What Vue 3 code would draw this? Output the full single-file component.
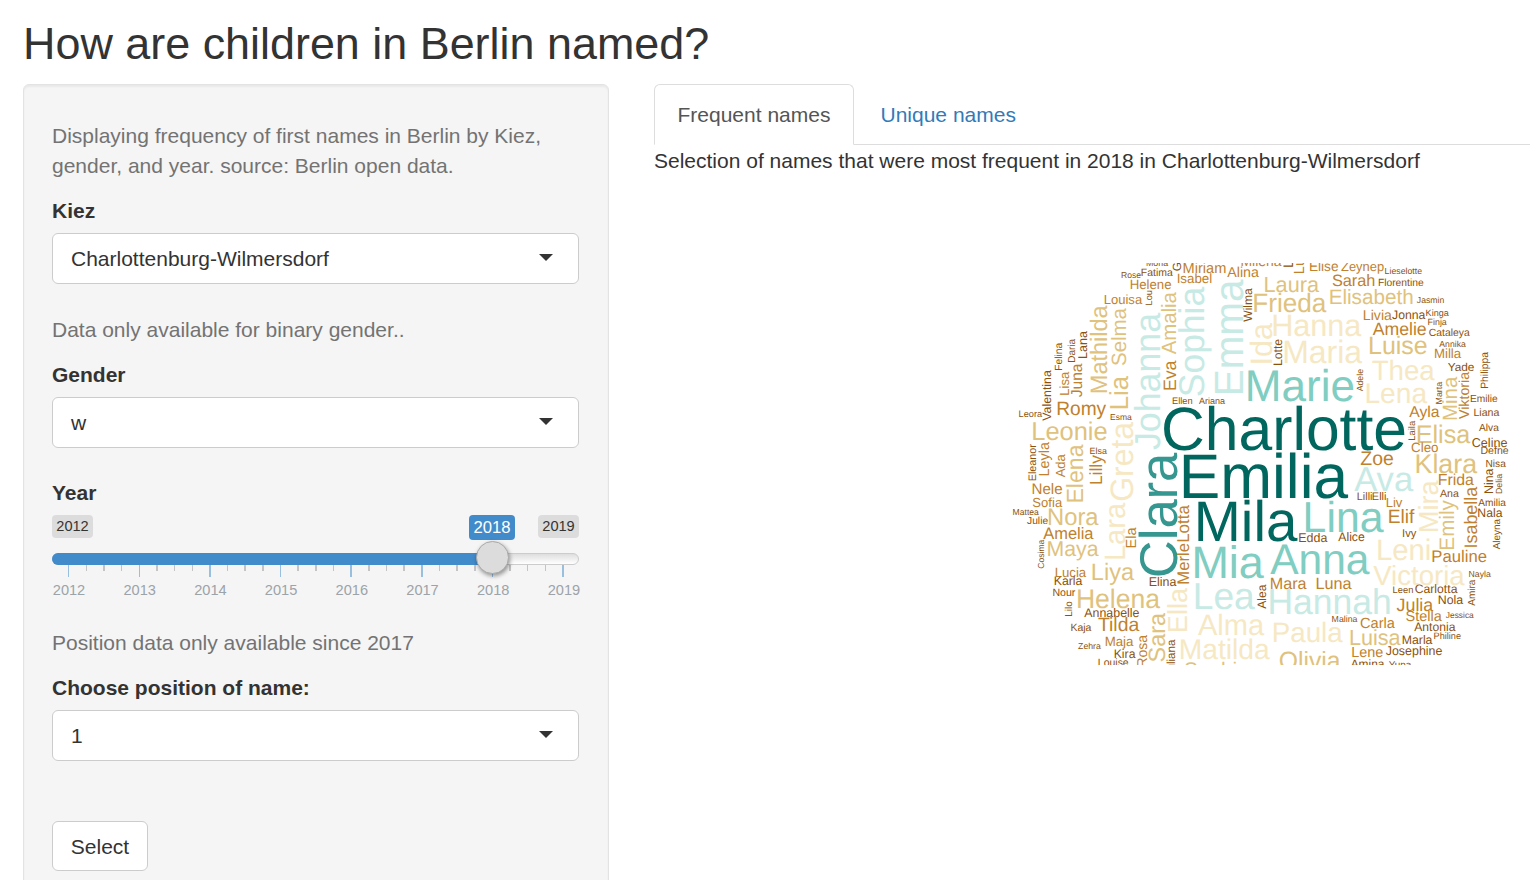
<script setup>
const palette = {
  d: '#8c510a', b: '#bf812d', g: '#dfc27d', w: '#f6e8c3',
  c: '#c7eae5', t: '#80cdc1', k: '#35978f', D: '#01665e'
}

// name, colour key, ink start x, ink end x, baseline y
const across = `Mona d 1146.7 1168 265.7
Rose d 1121.7 1140.7 278
Fatima d 1141.7 1172.7 276
Miriam b 1183.7 1225.3 273
Isabel b 1177.7 1211.3 283
Alina b 1227.3 1258.7 276.7
Milena b 1241.5 1281.5 266.4
Helene b 1130.7 1171 288.7
Louisa b 1104.7 1142 304
Elise b 1310 1338 271.3
Zeynep b 1341.3 1384 271.3
Lieselotte d 1385.3 1421.7 273.5
Laura g 1265.3 1318.7 291.7
Sarah b 1332.7 1374.3 286
Florentine d 1378.7 1423.3 286
Frieda g 1254.3 1326 311.7
Elisabeth g 1330.3 1412.3 304
Jasmin d 1417 1443.7 302.7
Livia b 1364 1391.7 319.7
Jonna d 1392.3 1425.3 319
Kinga d 1426.3 1448.7 316.3
Finja d 1428.3 1446.7 324.7
Hanna w 1273.7 1361 335.7
Amelie b 1372.7 1426 334.7
Cataleya d 1429.3 1469.7 336
Luise g 1370 1426.7 354
Annika d 1439.3 1465.7 347
Milla b 1435 1461 358
Maria w 1284.7 1361.7 362.7
Thea w 1372.3 1434.3 380.3
Yade d 1447.7 1474 371
Marie t 1248.3 1353.3 401
Lena w 1366.7 1426.7 402.7
Leora d 1019.3 1042 417
Romy b 1057.7 1106 414.7
Esma d 1110.7 1131.7 419.7
Ellen d 1172.7 1192 403.7
Ariana d 1199 1225 403.7
Leonie g 1033.3 1106.7 439.7
Elsa d 1090.3 1106.7 454
Charlotte D 1164 1404.7 450
Emilia D 1183.7 1347.3 497.7
Mila D 1198.3 1296.7 540.7
Nele b 1032.7 1062 494
Sofia b 1033 1062 507
Mattea d 1013.3 1038.7 515
Julie d 1027.3 1047.7 524
Nora g 1049 1098.3 524.7
Ayla b 1409.3 1439.3 417
Emilie d 1470.7 1497.3 402
Liana d 1474.3 1499.3 415.7
Alva d 1479 1498.7 430.7
Elisa g 1417.7 1470 442.7
Celine d 1472.3 1507 446.7
Cleo b 1411.7 1438 452
Defne d 1481.3 1508.3 454.3
Zoe b 1360.7 1393 464.7
Klara g 1416.7 1476.7 473
Nisa d 1486.3 1505.7 466.7
Ava c 1354.3 1412.7 490.7
Frida b 1439 1473.7 485
Lilli d 1357.7 1371.7 499.7
Elli d 1372.7 1385.7 499.7
Ana d 1440 1458.7 497
Liv b 1386.7 1402.3 507
Elif b 1389.3 1414.3 523
Amilia d 1478.3 1505.7 505.7
Nala d 1478.3 1502.3 516.7
Lina t 1306 1383 531.7
Amelia b 1043.3 1093.3 538.7
Maya g 1048.3 1098.3 556.3
Lucia b 1055.7 1086 576.7
Liya g 1092.7 1133.7 580.3
Karla d 1054.7 1082.3 584.7
Elina d 1149.7 1176.3 585.7
Mia t 1195 1263.3 577.7
Nour d 1053.3 1075.3 595.7
Helena g 1078 1159.7 607.7
Annabelle d 1084.3 1139 616.7
Lea c 1195.7 1254.3 609.3
Kaja d 1071.3 1091.3 630.7
Tilda b 1098.3 1139 631.3
Zehra d 1078.3 1100.7 648.7
Maja b 1105.7 1133.3 645.7
Kira d 1114.7 1135.3 657.7
Louise d 1098.7 1128.3 666.3
Elea d 1148 1168 672.5
Alma w 1198 1263.7 634.7
Matilda w 1181 1269.3 659.3
Sophie g 1185 1248 676.5
Edda d 1299.3 1327.3 541.7
Alice d 1338.3 1364.3 541
Ivy d 1403 1416.3 536.7
Anna t 1270.3 1369 574
Leni w 1378.3 1429.3 560.3
Pauline b 1432.7 1486.3 562.3
Victoria w 1373.3 1464.3 585
Nayla d 1469.3 1490.7 576.7
Mara b 1271 1306.3 588.7
Luna b 1316.7 1351.3 588.7
Leen d 1393.3 1412.7 592.7
Carlotta d 1415.3 1457.3 592.7
Hannah c 1270.3 1389.3 613.7
Julia b 1397 1433 610.7
Nola d 1438.7 1463 603.7
Stella b 1406.3 1441.7 621.3
Jessica d 1446 1473.7 617.7
Malina d 1332.3 1357.3 621.7
Carla b 1360.7 1394.7 627.7
Antonia d 1414.3 1455.3 630.7
Philine d 1434.3 1460.7 638.7
Paula w 1274 1342.3 642
Luisa g 1350.7 1400.3 645.3
Marla d 1402.7 1432.3 643.7
Lene b 1352.3 1382.7 656.7
Josephine d 1386 1442 654.7
Olivia g 1280 1340.3 669
Amina d 1350.7 1384.3 668.3
Yuna d 1388.7 1411.3 668.3`

// name, colour key, ink bottom y, ink top y, baseline x
const upright = `Greta d 270.7 242 1181
Lou d 304.7 290.7 1151.7
Amalia g 354.3 292.3 1176
Sophia c 395.5 287.3 1203.7
Emma c 393 280 1242.7
Wilma d 321.7 288.3 1252
Mathilda g 392.3 305.7 1107
Selma g 365 308.3 1126
Lia g 408.3 376.3 1128
Johanna c 449.3 313.3 1160
Eva b 389.7 360.7 1176
Felina d 370 343 1062
Daria d 362 339 1074.7
Lana d 358 331.3 1087
Juna b 397 363.7 1081.7
Lisa b 394.7 372 1069
Valentina d 420.7 370.3 1051
Leni d 267 243 1293
Luzie b 273 240 1303.7
Lotte d 365 339.3 1281.7
Ida w 363 323.3 1272
Philippa d 388 352 1488
Adele d 391.3 369.3 1363
Marta d 403.7 382 1442
Mina g 419.3 377 1456.7
Viktoria b 419 372 1468.7
Eleanor d 480.3 444.3 1035.7
Leyla b 475.3 442.3 1049
Ada b 477.3 454.3 1065
Elena g 501.7 444.7 1083
Lilly b 483.7 455.3 1102.3
Greta w 500.3 422.3 1132.7
Clara k 575.7 453.3 1176.7
Lotta b 541.5 505.3 1189.3
Merle b 583.3 543.7 1189.3
Lara w 558.7 503.3 1124.5
Ela b 547.3 527.7 1135.7
Laila d 440 421 1415.3
Nina d 493 468.7 1493
Delia d 493.3 474 1502
Mira w 531 480.7 1437.7
Emily g 549 500.3 1454
Isabella b 547 487 1477
Aleyna d 549.3 519 1499.7
Cosima d 568.3 539.7 1044
Lilo d 616 601.7 1072.3
Alea d 608.7 584.7 1266
Ella w 631 588.3 1187.3
Rosa b 666.5 635 1147
Sara g 661.3 613.3 1165.3
Juliana d 676 639.7 1174.7
Amira d 605.7 579.7 1474.7`

// Advance widths of the sans face, in thousandths of an em
const advance = {}
const setWidth = (chars, w) => [...chars].forEach(ch => { advance[ch] = w })
setWidth('abdeghnopquL', 556)
setWidth('ckvxyszJ', 500)
setWidth('ijl', 222)
setWidth('ft', 278)
setWidth('r', 333)
setWidth('w', 722)
setWidth('m', 833)
setWidth('ABEKPSVXY', 667)
setWidth('CDHNRU', 722)
setWidth('FTZ', 611)
setWidth('GO', 778)
setWidth('M', 833)
setWidth('I', 278)
setWidth('W', 944)

const leftBearing = ch => 'LEHMNPFKDRI'.includes(ch) ? 0.08 : 'CGOS'.includes(ch) ? 0.048 : 'AVYW'.includes(ch) ? 0.003 : 0.022
const rightBearing = ch => 'nhmilu'.includes(ch) ? 0.068 : 'eo'.includes(ch) ? 0.038 : 'yfrv'.includes(ch) ? 0.008 : 0.012

function fit(text, span) {
  const em = [...text].reduce((sum, ch) => sum + advance[ch], 0) / 1000
  const left = leftBearing(text[0])
  const unit = span / (em - left - rightBearing(text[text.length - 1]))
  return { size: unit * 1.01, length: unit * em, offset: unit * left }
}

const words = [
  ...across.split('\n').map(row => {
    const [text, tone, from, to, base] = row.split(' ')
    const f = fit(text, to - from)
    return { text, fill: palette[tone], ...f, transform: `translate(${from - f.offset} ${base})` }
  }),
  ...upright.split('\n').map(row => {
    const [text, tone, bottom, top, base] = row.split(' ')
    const f = fit(text, bottom - top)
    return { text, fill: palette[tone], ...f, transform: `translate(${base} ${+bottom + f.offset}) rotate(-90)` }
  })
]

const years = [2012, 2013, 2014, 2015, 2016, 2017, 2018, 2019]
const tickX = [16, 34, 51, 69, 87, 104, 122, 140, 157, 175, 192, 210, 228, 245, 263, 281, 298, 316, 334, 351, 369, 387, 404, 422, 440, 457, 475, 493, 510]
const wide = new Set([2, 5, 8, 10, 11, 13, 14, 16, 17, 19, 20, 22, 23, 25, 28])
const ticks = tickX.map((x, i) => ({ x, w: wide.has(i) ? 2 : 1, major: i % 4 === 0 }))
</script>

<template>
  <div class="page">
    <h2>How are children in Berlin named?</h2>
    <div class="row">
      <form class="well" @submit.prevent>
        <p class="help first">Displaying frequency of first names in Berlin by Kiez, gender, and year. source: Berlin open data.</p>
        <label>Kiez</label>
        <div class="select"><span>Charlottenburg-Wilmersdorf</span><i class="caret"></i></div>
        <p class="help gap">Data only available for binary gender..</p>
        <label>Gender</label>
        <div class="select"><span>w</span><i class="caret"></i></div>
        <label class="year">Year</label>
        <div class="slider">
          <span class="badge min">2012</span>
          <span class="badge max">2019</span>
          <span class="badge current">2018</span>
          <div class="track"><div class="bar"></div></div>
          <svg class="ticks" width="527" height="35">
            <rect v-for="t in ticks" :key="t.x" :x="t.x" y="0" :width="t.w" :height="t.major ? 12 : 6" :fill="t.major ? '#99bfdf' : '#c4c4c4'" />
            <text v-for="(y, i) in years" :key="y" :x="17 + i * 70.7" y="30" text-anchor="middle">{{ y }}</text>
          </svg>
          <div class="handle"></div>
        </div>
        <p class="help position">Position data only available since 2017</p>
        <label>Choose position of name:</label>
        <div class="select"><span>1</span><i class="caret"></i></div>
        <button type="button">Select</button>
      </form>
      <main>
        <nav class="tabs">
          <a class="active">Frequent names</a>
          <a>Unique names</a>
        </nav>
        <p class="summary">Selection of names that were most frequent in 2018 in Charlottenburg-Wilmersdorf</p>
        <svg class="cloud" viewBox="1010 263 510 402" width="510" height="402">
          <text v-for="(w, i) in words" :key="i" :transform="w.transform" :fill="w.fill" :font-size="w.size" :textLength="w.length" lengthAdjust="spacingAndGlyphs">{{ w.text }}</text>
        </svg>
      </main>
    </div>
  </div>
</template>

<style>
body { margin: 0; overflow: hidden; background: #fff; }
</style>

<style scoped>
.page { box-sizing: border-box; width: 1530px; height: 880px; overflow: hidden; padding: 19px 0 0 23px; font: 21px/30px "Liberation Sans", Arial, sans-serif; color: #333; }
h2 { margin: 0 0 15px; font-size: 44.9px; font-weight: 400; line-height: 50px; }
.row { display: flex; align-items: flex-start; gap: 45px; }
.well { box-sizing: border-box; flex: none; width: 586px; height: 900px; padding: 36px 29px 0 28px; border: 1px solid #e3e3e3; border-radius: 6px; background: #f5f5f5; box-shadow: inset 0 2px 2px rgba(0, 0, 0, .05); }
p { margin: 0; }
.help { color: #737373; }
.help.first { margin-bottom: 15px; }
.help.gap { margin: 31px 0 15px; }
label { display: block; height: 30px; margin-bottom: 7px; font-weight: 700; }
label.year { margin-top: 30px; }
.select { box-sizing: border-box; display: flex; align-items: center; justify-content: space-between; height: 51px; padding: 0 25px 0 18px; border: 1px solid #ccc; border-radius: 6px; background: #fff; }
.caret { border: 7px solid transparent; border-top-color: #333; border-bottom: 0; margin-bottom: 2px; }
.slider { position: relative; height: 113px; }
.badge { position: absolute; top: 0; box-sizing: border-box; border-radius: 4px; text-align: center; }
.badge.min, .badge.max { width: 41px; height: 23px; font-size: 14.6px; line-height: 23px; background: #dcdcdc; }
.badge.min { left: 0; }
.badge.max { right: 0; }
.badge.current { left: 417px; width: 46px; height: 25px; font-size: 16.7px; line-height: 26px; background: #428bca; color: #fff; }
.track { position: absolute; left: 0; right: 0; top: 38px; box-sizing: border-box; height: 12px; border: 1px solid #ccc; border-radius: 6px; background: linear-gradient(#dedede, #fff); }
.bar { width: 440px; height: 12px; margin: -1px 0 0 -1px; border-radius: 6px 0 0 6px; background: #428bca; }
.ticks { position: absolute; left: 0; top: 50px; overflow: visible; shape-rendering: crispEdges; font-size: 14.6px; fill: #9ca3a9; }
.handle { position: absolute; left: 424px; top: 26px; box-sizing: border-box; width: 33px; height: 33px; border: 1px solid #aaa; border-radius: 50%; background: #dcdcdc; box-shadow: 1px 2px 4px rgba(0, 0, 0, .4); }
.position { margin-bottom: 15px; }
button { display: block; box-sizing: border-box; width: 96px; height: 50px; margin-top: 60px; padding: 2px 0 0; border: 1px solid #ccc; border-radius: 6px; background: #fff; color: #333; font: inherit; }
main { flex: 1; min-width: 0; }
.tabs { display: flex; gap: 3px; height: 60px; border-bottom: 1px solid #ddd; }
.tabs a { box-sizing: border-box; height: 61px; padding: 15px 22.5px; border: 1px solid transparent; border-radius: 6px 6px 0 0; color: #337ab7; }
.tabs .active { width: 200px; border-color: #ddd; border-bottom-color: #fff; background: #fff; color: #555; }
.summary { margin-top: 1px; white-space: nowrap; }
.cloud { display: block; margin: 87px 0 0 356px; overflow: hidden; text-rendering: geometricPrecision; }
</style>
